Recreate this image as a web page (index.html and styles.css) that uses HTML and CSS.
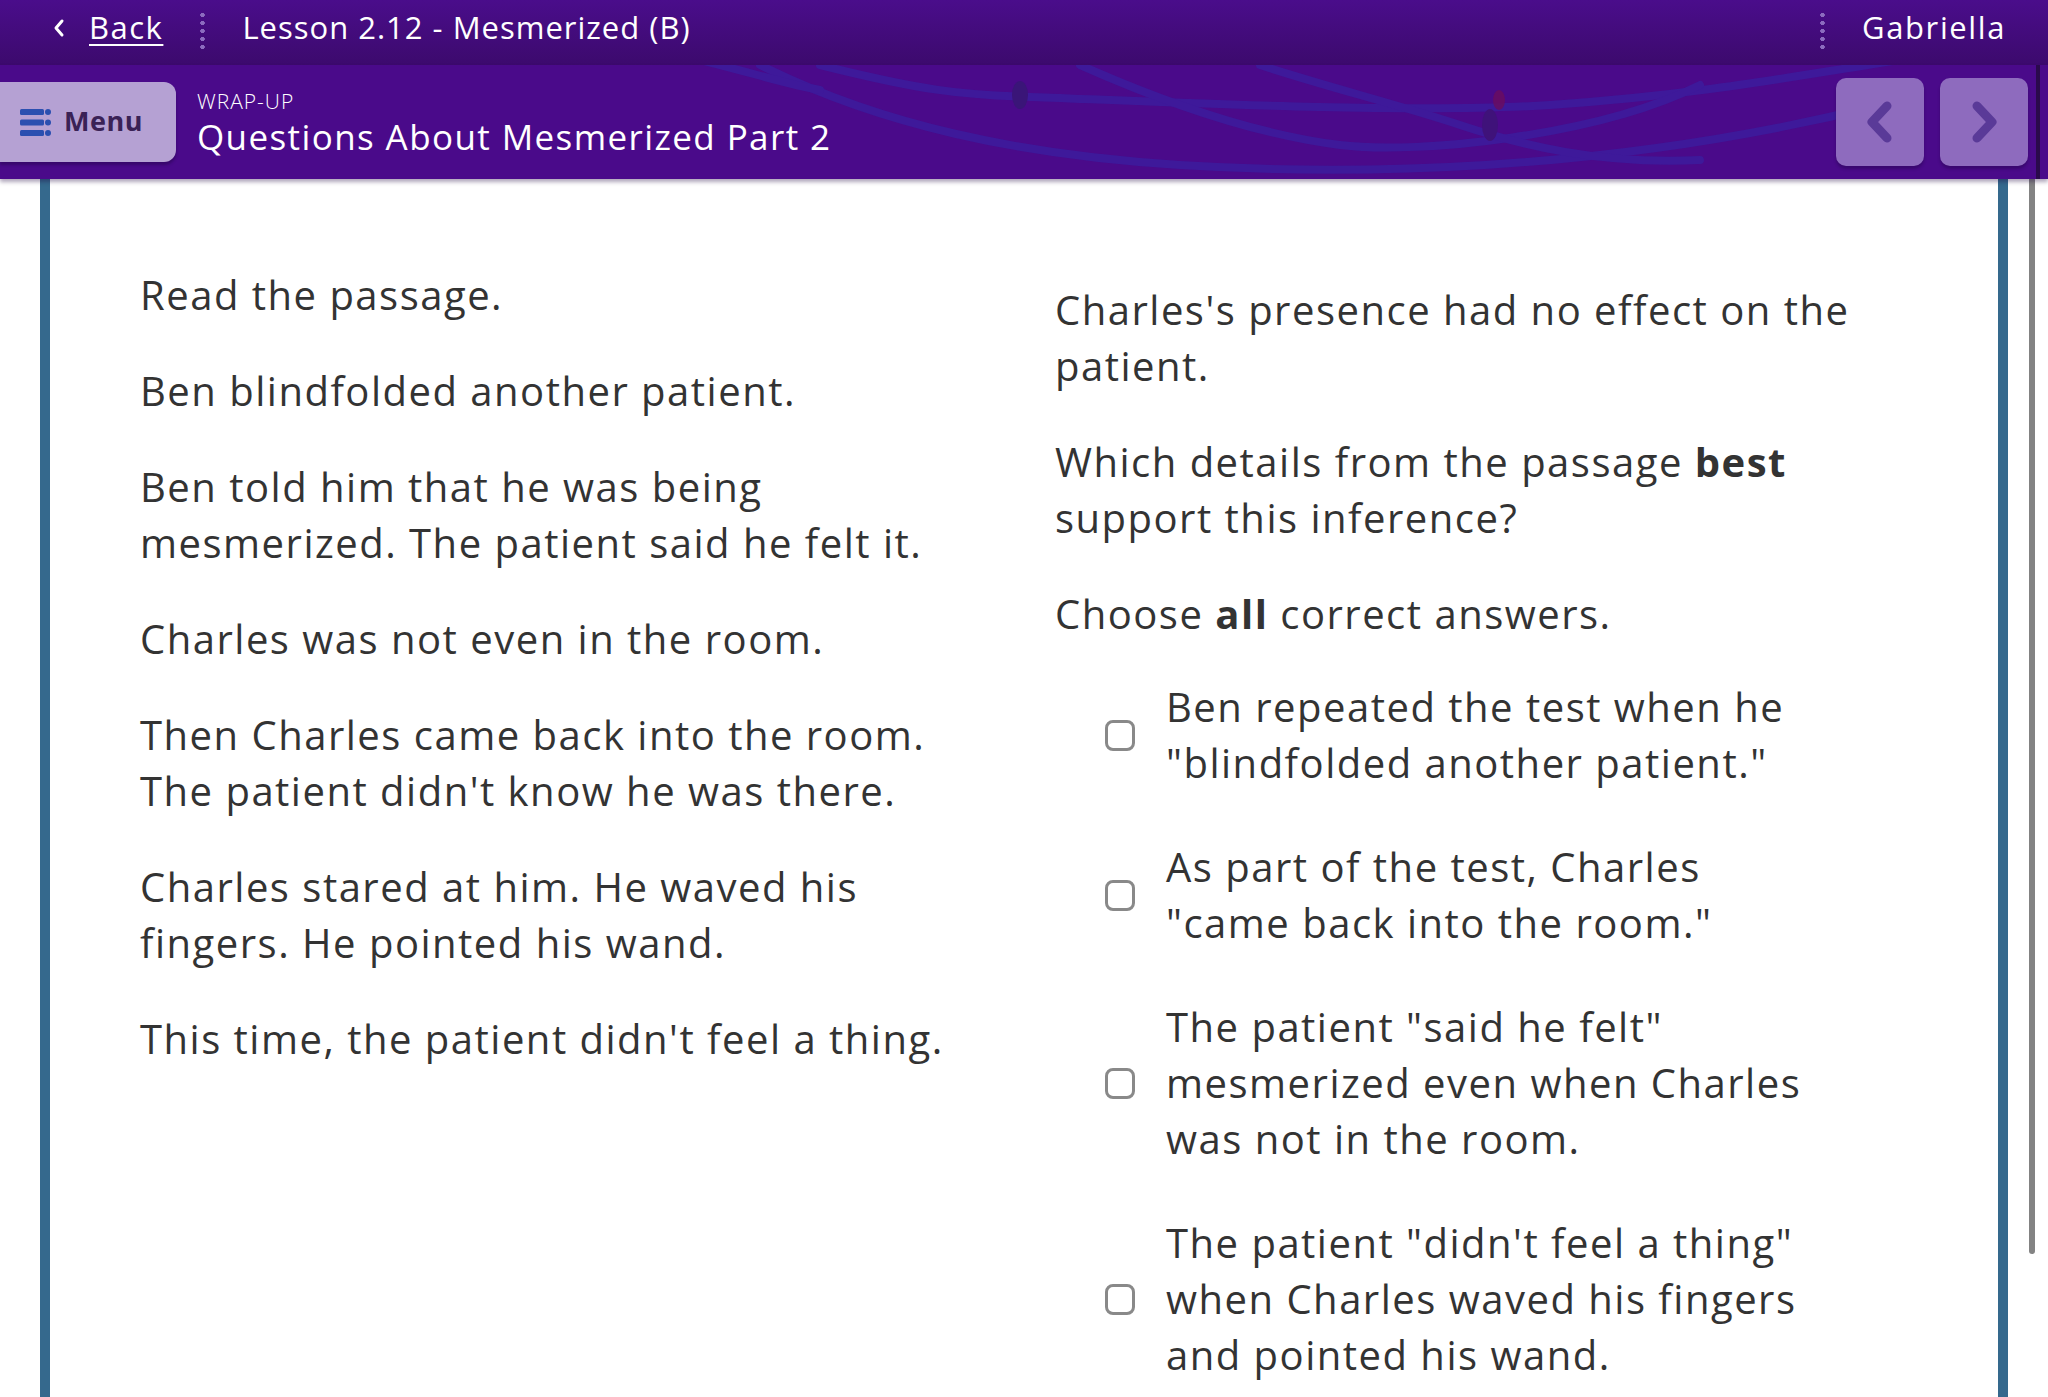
FILE: index.html
```html
<!DOCTYPE html>
<html lang="en">
<head>
<meta charset="utf-8">
<title>Lesson 2.12 - Mesmerized (B)</title>
<link rel="stylesheet" href="styles.css">
</head>
<body>
<header class="topbar">
  <a class="back" href="#">
    <svg class="back-icon" viewBox="0 0 12 20" width="12" height="20"><path d="M9 3 L3 10 L9 17" fill="none" stroke="#fff" stroke-width="3" stroke-linecap="round" stroke-linejoin="round"/></svg>
    <span class="back-text">Back</span>
  </a>
  <span class="dots"></span>
  <span class="lesson">Lesson 2.12 - Mesmerized (B)</span>
  <span class="spacer"></span>
  <span class="dots"></span>
  <span class="user">Gabriella</span>
</header>

<div class="subbar">
  <svg class="subbar-art" viewBox="0 0 1200 114" width="1200" height="114" preserveAspectRatio="none">
    <g fill="none" stroke="#3d1b9c" stroke-width="8" stroke-linecap="round" opacity="0.9">
      <path d="M60 0 C 180 60, 320 90, 480 100 S 900 110, 1180 40"/>
      <path d="M120 0 C 220 25, 260 30, 330 32 S 700 50, 850 40 S 1100 10, 1200 -5"/>
      <path d="M380 0 C 470 40, 560 70, 640 80 S 900 70, 1000 20"/>
      <path d="M560 0 C 620 20, 700 40, 760 60 S 900 100, 1000 95"/>
      <path d="M0 -5 C 60 10, 90 20, 120 25"/>
    </g>
    <ellipse cx="320" cy="30" rx="8" ry="14" fill="#3a1578"/>
    <ellipse cx="799" cy="35" rx="6" ry="10" fill="#6a0d5e" opacity="0.8"/>
    <ellipse cx="790" cy="60" rx="8" ry="16" fill="#3f127a"/>
    <ellipse cx="1165" cy="35" rx="9" ry="16" fill="#7a2e8e" opacity="0.6"/>
  </svg>
  <button class="menu-btn" type="button">
    <svg class="menu-icon" viewBox="0 0 31 27" width="31" height="27">
      <rect x="0" y="0" width="24" height="6" rx="1.5" fill="#2b4fb0"/>
      <rect x="0" y="10.5" width="24" height="6" rx="1.5" fill="#2b4fb0"/>
      <rect x="0" y="21" width="24" height="6" rx="1.5" fill="#2b4fb0"/>
      <circle cx="28" cy="3" r="3" fill="#2b4fb0"/>
      <circle cx="28" cy="13.5" r="3" fill="#2b4fb0"/>
      <circle cx="28" cy="24" r="3" fill="#2b4fb0"/>
    </svg>
    <span>Menu</span>
  </button>
  <div class="titles">
    <div class="kicker">WRAP-UP</div>
    <div class="title">Questions About Mesmerized Part 2</div>
  </div>
  <span class="spacer"></span>
  <div class="nav">
    <button class="nav-btn" type="button" aria-label="Previous">
      <svg viewBox="0 0 40 50" width="40" height="50"><path d="M27 9 L12 25 L27 41" fill="none" stroke="#5a3a98" stroke-width="9" stroke-linecap="round" stroke-linejoin="round"/></svg>
    </button>
    <button class="nav-btn" type="button" aria-label="Next">
      <svg viewBox="0 0 40 50" width="40" height="50"><path d="M13 9 L28 25 L13 41" fill="none" stroke="#5a3a98" stroke-width="9" stroke-linecap="round" stroke-linejoin="round"/></svg>
    </button>
  </div>
  <span class="scroll-dark"></span>
</div>

<main class="card">
  <section class="passage">
    <p>Read the passage.</p>
    <p>Ben blindfolded another patient.</p>
    <p>Ben told him that he was being<br>mesmerized. The patient said he felt it.</p>
    <p>Charles was not even in the room.</p>
    <p>Then Charles came back into the room.<br>The patient didn't know he was there.</p>
    <p>Charles stared at him. He waved his<br>fingers. He pointed his wand.</p>
    <p>This time, the patient didn't feel a thing.</p>
  </section>
  <section class="question">
    <p>Charles's presence had no effect on the<br>patient.</p>
    <p>Which details from the passage <b>best</b><br>support this inference?</p>
    <p>Choose <b>all</b> correct answers.</p>
    <ul class="options">
      <li class="option"><span class="box"></span><span class="label">Ben repeated the test when he<br>"blindfolded another patient."</span></li>
      <li class="option"><span class="box"></span><span class="label">As part of the test, Charles<br>"came back into the room."</span></li>
      <li class="option"><span class="box"></span><span class="label">The patient "said he felt"<br>mesmerized even when Charles<br>was not in the room.</span></li>
      <li class="option"><span class="box"></span><span class="label">The patient "didn't feel a thing"<br>when Charles waved his fingers<br>and pointed his wand.</span></li>
    </ul>
  </section>
  <span class="scrollbar"></span>
</main>
</body>
</html>
```

FILE: styles.css
```css
* { box-sizing: border-box; }

html, body {
  margin: 0;
  padding: 0;
  background: #ffffff;
  font-family: "Open Sans", "Noto Sans", sans-serif;
  color: #333333;
}

body {
  min-height: 1397px;
  display: flex;
  flex-direction: column;
  overflow: hidden;
}

/* ---------- top bar ---------- */
.topbar {
  height: 65px;
  display: flex;
  align-items: center;
  padding: 0 42px 12px 53px;
  background: linear-gradient(#4a0d8b, #3c0a6d);
  color: #ffffff;
  font-size: 31px;
  letter-spacing: 1px;
}

.back {
  display: flex;
  align-items: center;
  gap: 24px;
  color: #ffffff;
  text-decoration: none;
}

.back-icon { margin-top: 2px; }

.back-text {
  text-decoration: underline;
  text-decoration-thickness: 2px;
  text-underline-offset: 5px;
  letter-spacing: 1.5px;
}

.dots {
  width: 5px;
  height: 40px;
  margin: 8px 37px 0 37px;
  background: radial-gradient(circle, #8c6cbf 2px, transparent 2.5px) 0 0 / 5px 8px repeat-y;
}

.spacer { flex: 1; }

.user { letter-spacing: 1.6px; }

/* ---------- sub bar ---------- */
.subbar {
  position: relative;
  height: 114px;
  display: flex;
  align-items: center;
  background: #4a0a8a;
  box-shadow: 0 3px 4px rgba(30, 0, 60, 0.35);
  z-index: 2;
  overflow: hidden;
}

.subbar-art {
  position: absolute;
  left: 700px;
  top: 0;
  pointer-events: none;
}

.menu-btn {
  position: relative;
  width: 176px;
  height: 80px;
  display: flex;
  align-items: center;
  gap: 13px;
  padding: 0 0 4px 20px;
  border: 0;
  border-radius: 0 12px 12px 0;
  background: #b5a1d3;
  box-shadow: 0 3px 3px rgba(20, 0, 50, 0.35);
  font-family: "Open Sans", "Noto Sans", sans-serif;
  font-weight: 700;
  font-size: 27px;
  letter-spacing: 0.5px;
  color: #3a2256;
}

.menu-icon { margin-top: 4px; }

.titles {
  position: relative;
  margin-left: 21px;
  color: #ffffff;
  padding-top: 4px;
}

.kicker {
  font-size: 21px;
  line-height: 26px;
  font-weight: 300;
  letter-spacing: 1px;
}

.title {
  font-size: 35px;
  line-height: 46px;
  font-weight: 500;
  letter-spacing: 1.4px;
}

.nav {
  position: relative;
  display: flex;
  gap: 16px;
  margin-right: 20px;
}

.nav-btn {
  width: 88px;
  height: 88px;
  display: flex;
  align-items: center;
  justify-content: center;
  border: 0;
  border-radius: 10px;
  background: #8e6bbe;
  box-shadow: 0 3px 3px rgba(20, 0, 50, 0.3);
  padding: 0;
}

.scroll-dark {
  position: absolute;
  right: 8px;
  top: -4px;
  width: 4px;
  height: 120px;
  background: #2a0a4c;
}

/* ---------- content card ---------- */
.card {
  position: relative;
  flex: 1;
  margin: 0 40px;
  border-left: 10px solid #35698d;
  border-right: 10px solid #35698d;
  display: grid;
  grid-template-columns: 915px 1fr;
  font-size: 40px;
  line-height: 56px;
  letter-spacing: 1.5px;
  color: #333333;
}

.card p { margin: 0 0 40px 0; }

.passage { padding: 88px 0 0 90px; }

.question { padding: 103px 20px 0 90px; }

.question b { font-weight: 700; }

.options {
  list-style: none;
  margin: -3px 0 0 0;
  padding: 0 0 0 50px;
  display: flex;
  flex-direction: column;
  gap: 48px;
}

.option {
  display: flex;
  align-items: center;
  gap: 31px;
}

.box {
  flex: none;
  width: 30px;
  height: 31px;
  border: 3px solid #898989;
  border-radius: 8px;
  background: #ffffff;
}

.label { white-space: nowrap; }

.scrollbar {
  position: absolute;
  right: -37px;
  top: -2px;
  width: 6px;
  height: 1077px;
  border-radius: 3px;
  background: #838383;
}
```
